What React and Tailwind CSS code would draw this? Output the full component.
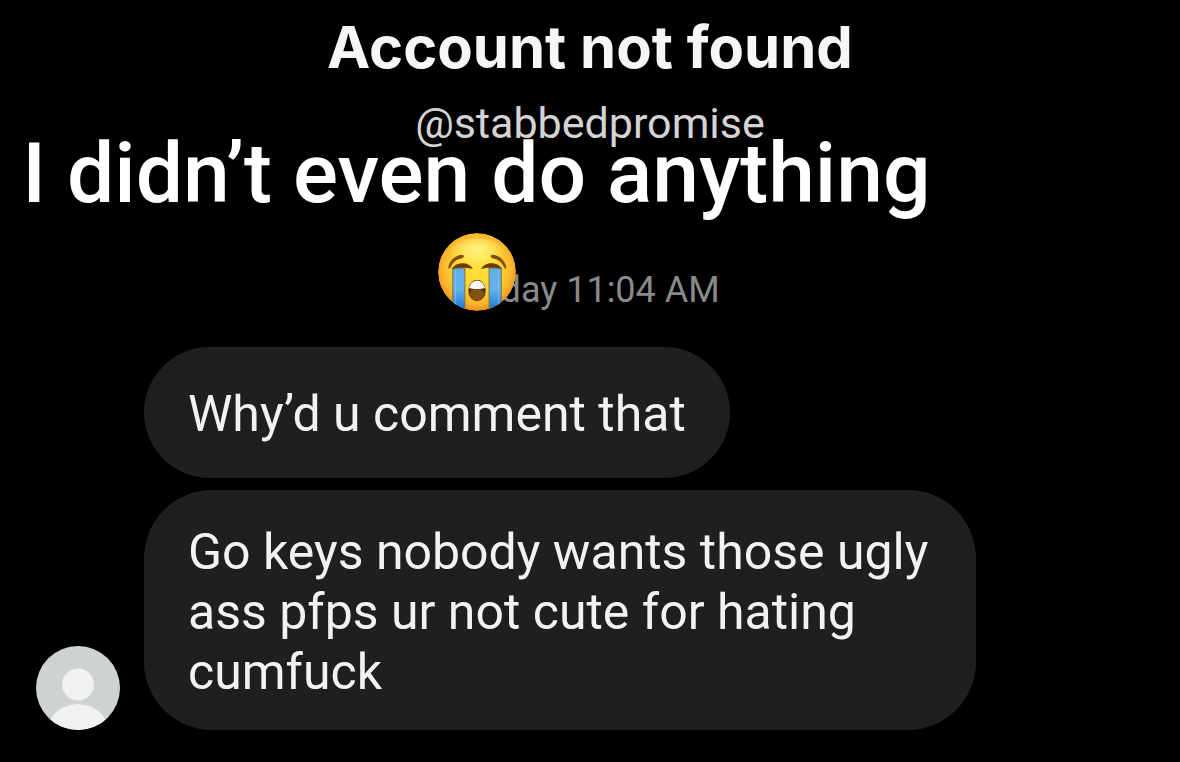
import clsx from 'clsx';

const messages = [
  { id: 1, text: 'Why’d u comment that' },
  { id: 2, text: 'Go keys nobody wants those ugly ass pfps ur not cute for hating cumfuck', long: true },
];

// Default profile picture
const Avatar = () => (
  <svg viewBox="0 0 84 84" className="h-[84px] w-[84px] shrink-0 rounded-full" role="img" aria-label="Profile">
    <rect width="84" height="84" fill="#cfd2d3" />
    <circle cx="42" cy="38.5" r="16" fill="#f1f1f4" />
    <circle cx="42" cy="91" r="33" fill="#f1f1f4" />
  </svg>
);

// Loudly crying face
const CryingFace = () => (
  <svg viewBox="0 0 232 232" className="h-[78px] w-[78px]" role="img" aria-label="Loudly crying face">
    <defs>
      <radialGradient id="face" cx="0.5" cy="0.46" r="0.55">
        <stop offset="0" stopColor="#ffe234" />
        <stop offset="0.55" stopColor="#fed433" />
        <stop offset="0.82" stopColor="#fab42c" />
        <stop offset="1" stopColor="#ec8a1e" />
      </radialGradient>
      <radialGradient id="shine" cx="0.5" cy="0.3" r="0.5">
        <stop offset="0" stopColor="#fff68c" stopOpacity="0.9" />
        <stop offset="1" stopColor="#fff27a" stopOpacity="0" />
      </radialGradient>
      <linearGradient id="tear" x1="0" y1="0" x2="0" y2="1">
        <stop offset="0" stopColor="#5eaee9" />
        <stop offset="0.5" stopColor="#62b3ee" />
        <stop offset="1" stopColor="#1b70cf" />
      </linearGradient>
      <clipPath id="head">
        <circle cx="116" cy="116" r="116" />
      </clipPath>
      <clipPath id="mouth">
        <ellipse cx="116" cy="171" rx="24" ry="30" />
      </clipPath>
    </defs>
    <g clipPath="url(#head)">
      <circle cx="116" cy="116" r="116" fill="url(#face)" />
      <ellipse cx="116" cy="74" rx="88" ry="58" fill="url(#shine)" />
      <path d="M44 104h36v128H44z" fill="url(#tear)" stroke="#82713d" strokeWidth="3" />
      <path d="M152 104h36v128h-36z" fill="url(#tear)" stroke="#82713d" strokeWidth="3" />
      <path d="M52 108v112M180 108v112" stroke="#8bcbf5" strokeWidth="4" opacity="0.5" />
    </g>
    <path d="M42 108C52 84 92 84 104 107C88 103 60 101 42 108Z" fill="#6b3b08" />
    <path d="M190 108C180 84 140 84 128 107C144 103 172 101 190 108Z" fill="#6b3b08" />
    <path d="M31 102C34 82 52 66 72 65C80 66 78 74 70 76C54 79 45 87 38 101C35 107 30 107 31 102Z" fill="#80500c" />
    <path d="M203 102C200 82 182 66 162 65C154 66 156 74 164 76C180 79 189 87 196 101C199 107 204 107 203 102Z" fill="#80500c" />
    <ellipse cx="116" cy="171" rx="26" ry="32" fill="#5b3305" />
    <g clipPath="url(#mouth)">
      <ellipse cx="116" cy="192" rx="24" ry="28" fill="#825313" />
      <path d="M90 139h52v24c-14 5-38 5-52 0z" fill="#fbf8f4" />
    </g>
  </svg>
);

const Bubble = ({ text, long }) => (
  <p
    className={clsx(
      'max-w-[832px] rounded-[68px] bg-[#1f1f1f] px-11 text-[50px] leading-[60px] text-[#f2f2f2]',
      long ? 'pt-8 pb-7' : 'pt-[37px] pb-[34px]'
    )}
  >
    {text}
  </p>
);

export default function App() {
  return (
    <main className="relative min-h-screen overflow-hidden bg-black font-['Roboto',sans-serif]">
      <header className="flex flex-col items-center pt-3 text-center">
        <h1 className="font-['Inter',sans-serif] text-[58px] leading-[70px] font-bold text-[#f6f6f6]">
          Account not found
        </h1>
        <p className="mt-4 text-[43px] leading-[50px] text-[#d4d4d4]">@stabbedpromise</p>
      </header>

      <p className="mt-[120px] text-center text-[36px] leading-[44px] text-[#8a8a8a]">Today 11:04 AM</p>

      <section className="mt-[35px] flex items-end gap-6 pr-6 pl-9">
        <Avatar />
        <div className="flex flex-col items-start gap-3">
          {messages.map((message) => (
            <Bubble key={message.id} text={message.text} long={message.long} />
          ))}
        </div>
      </section>

      {/* Caption laid over the chat */}
      <div className="absolute top-[124px] left-0 flex w-[953px] flex-col items-center gap-[9px]">
        <p className="text-[84px] leading-[100px] font-medium whitespace-nowrap text-white">
          I didn’t even do anything
        </p>
        <CryingFace />
      </div>
    </main>
  );
}
